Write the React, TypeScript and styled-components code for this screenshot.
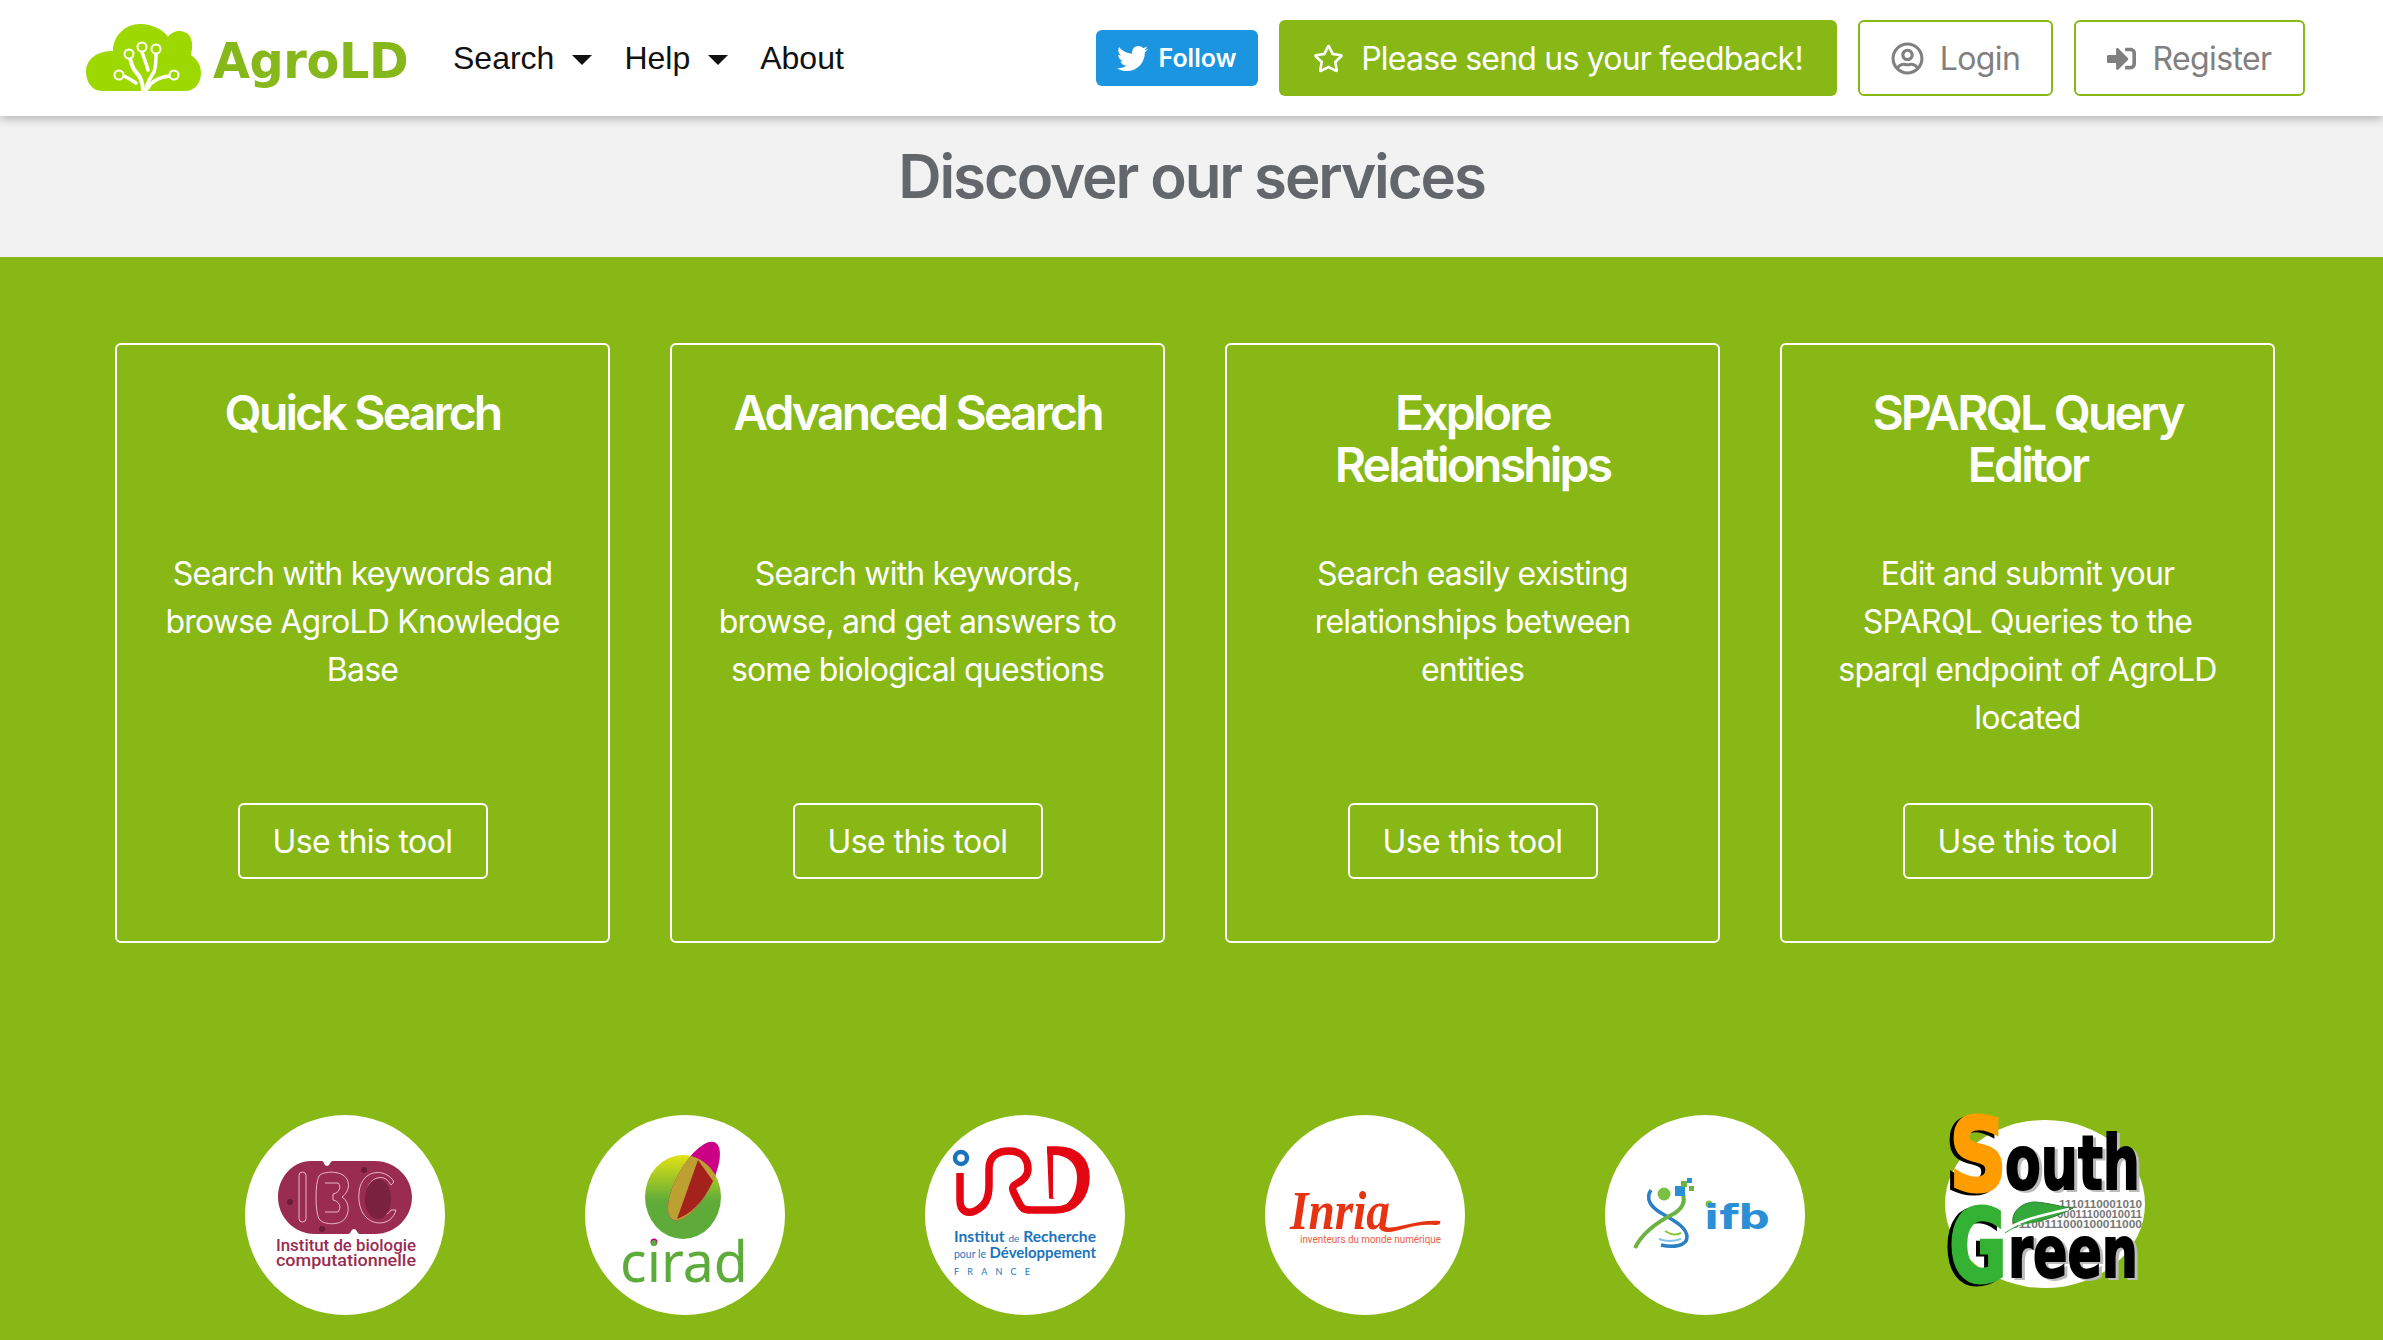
import React from 'react';
import styled, { createGlobalStyle } from 'styled-components';
import { FaRegStar, FaRegUserCircle, FaSignInAlt, FaTwitter } from 'react-icons/fa';

const GREEN = '#87b816';

const services = [
  {
    title: 'Quick Search',
    text: 'Search with keywords and browse AgroLD Knowledge Base'
  },
  {
    title: 'Advanced Search',
    text: 'Search with keywords, browse, and get answers to some biological questions'
  },
  {
    title: 'Explore Relationships',
    text: 'Search easily existing relationships between entities'
  },
  {
    title: 'SPARQL Query Editor',
    text: 'Edit and submit your SPARQL Queries to the sparql endpoint of AgroLD located'
  }
];

const CloudLogo = () => (
  <svg width="130" height="85" viewBox="0 0 130 85" style={{ margin: '0 -4px 0 -6px' }}>
    <path
      d="M22 77C11 77 6 66 6 58 6 45 17 37 33 37 33 22 45 10 60 10 72 10 84 16 88 23 92 17 100 16 104 18 111 20 114 28 111 41 118 46 121 52 121 59 121 69 115 77 105 77Z"
      fill="#9dd900"
    />
    <g fill="none" stroke="#fff" strokeLinecap="round">
      <path d="M63 77C63 68 60 62 56 58 52 54 51 48 50 44" strokeWidth="4" />
      <path d="M66 77C66 69 71 63 74 58 76 52 76 46 76 40" strokeWidth="3.5" />
      <path d="M68 56C66 48 63 42 62 38" strokeWidth="3.5" />
      <path d="M56 69C50 65 46 63 44 62" strokeWidth="3.5" />
      <path d="M68 74C72 66 80 63 90 62" strokeWidth="3.5" />
    </g>
    <g fill="#9dd900" stroke="#fff" strokeWidth="2">
      <circle cx="49" cy="40" r="4.5" />
      <circle cx="62" cy="33" r="4.5" />
      <circle cx="76" cy="35" r="4.5" />
      <circle cx="39" cy="61" r="4.5" />
      <circle cx="94" cy="61" r="4.5" />
    </g>
  </svg>
);

const IbcLogo = () => (
  <svg width="200" height="200" viewBox="0 0 200 200">
    <path
      d="M66 46H77C79 46 79 51 82 51 85 51 85 46 88 46H130C151 46 167 63 167 82 167 102 151 119 130 119H115C112 119 112 114 109 114 106 114 106 119 103 119H70C49 119 33 102 33 82 33 63 47 46 66 46Z"
      fill="#992c50"
    />
    <g fill="none" stroke="#f0c6d2" strokeWidth="0.9">
      <rect x="54" y="57" width="7" height="50" rx="3.5" />
      <path d="M74 61C77 56 100 54 103 67 105 74 100 80 97 82 102 85 105 92 102 100 98 112 78 110 74 104 70 96 70 68 74 61Z" />
      <path d="M80 68H93C97 72 94 78 88 79V85C94 86 97 92 93 97H80" />
      <path d="M149 67C143 55 121 52 115 72 111 88 117 107 134 108 143 108 149 103 151 95 H146 C143 101 130 104 124 90 120 78 122 66 132 63 139 61 143 65 146 70Z" />
    </g>
    <ellipse cx="133" cy="84" rx="13" ry="20" fill="#7a2140" />
    <g fill="#6a1c38">
      <circle cx="45" cy="87" r="3" />
      <circle cx="119" cy="55" r="3" />
      <circle cx="77" cy="114" r="3" />
    </g>
    <g fill="#992c50" fontFamily="Roboto, sans-serif" fontWeight="500" fontSize="16">
      <text x="31" y="136" textLength="140" lengthAdjust="spacingAndGlyphs">Institut de biologie</text>
      <text x="31" y="151" textLength="140" lengthAdjust="spacingAndGlyphs">computationnelle</text>
    </g>
  </svg>
);

const CiradLogo = () => (
  <svg width="200" height="200" viewBox="0 0 200 200">
    <defs>
      <linearGradient id="ciradGreen" x1="0" y1="0" x2="0" y2="1">
        <stop offset="0" stopColor="#e3e214" />
        <stop offset="0.55" stopColor="#60ab39" />
        <stop offset="1" stopColor="#5dab3a" />
      </linearGradient>
      <clipPath id="ciradClip">
        <ellipse cx="98" cy="82" rx="38" ry="42" />
      </clipPath>
    </defs>
    <ellipse cx="98" cy="82" rx="38" ry="42" fill="url(#ciradGreen)" />
    <ellipse cx="109" cy="66" rx="17" ry="44" transform="rotate(29 109 66)" fill="#cc0085" />
    <g clipPath="url(#ciradClip)">
      <ellipse cx="109" cy="66" rx="17" ry="44" transform="rotate(29 109 66)" fill="#bda032" />
      <path d="M113 45L92 104C104 100 118 88 128 66Z" fill="#a4211c" />
    </g>
    <circle cx="69" cy="127" r="3.5" fill="#cc0085" />
    <text x="35" y="167" textLength="128" lengthAdjust="spacingAndGlyphs" fontFamily="Noto Sans, sans-serif" fontSize="56" fill="#5dab3a">cirad</text>
  </svg>
);

const IrdLogo = () => (
  <svg width="200" height="200" viewBox="0 0 200 200">
    <circle cx="36" cy="43" r="6" fill="none" stroke="#1b75bc" strokeWidth="4.5" />
    <path
      d="M35 58V85C35 97 43 99 50 96 60 91 64 84 64 70V54C64 40 74 36 84 36 97 36 103 44 103 54 103 62 97 66 91 69 87 71 87 74 89 78L94 88C97 94 99 95 106 95H130C150 95 161 80 161 62 161 43 148 35 132 35H122"
      fill="none"
      stroke="#e30613"
      strokeWidth="7.5"
    />
    <path d="M122 33C146 33 163 42 163 62 163 84 148 97 130 95 147 90 152 76 152 62 152 48 142 40 128 40V83C134 83 124 85 124 83Z" fill="#e30613" />
    <g fill="#1b75bc" fontFamily="Lato, sans-serif" fontWeight="700">
      <text x="29" y="127" fontSize="15.5" textLength="142" lengthAdjust="spacingAndGlyphs">Institut <tspan fontSize="10" fontWeight="400">de</tspan> Recherche</text>
      <text x="29" y="143" fontSize="15" textLength="142" lengthAdjust="spacingAndGlyphs"><tspan fontSize="10.5" fontWeight="400">pour le</tspan> Développement</text>
      <text x="29" y="160" fontSize="9" fontWeight="400" textLength="76">FRANCE</text>
    </g>
  </svg>
);

const InriaLogo = () => (
  <svg width="200" height="200" viewBox="0 0 200 200">
    <text x="25" y="114" fontFamily="Liberation Serif, serif" fontStyle="italic" fontWeight="700" fontSize="54" fill="#e63312" textLength="100" lengthAdjust="spacingAndGlyphs">Inria</text>
    <path d="M114 112C130 116 150 104 175 106 176 109 174 110 170 110 150 108 136 116 124 117 118 117 115 115 114 112Z" fill="#e63312" />
    <text x="35" y="128" fontFamily="Roboto, sans-serif" fontSize="11" fill="#e9604a" textLength="141" lengthAdjust="spacingAndGlyphs">inventeurs du monde numérique</text>
  </svg>
);

const IfbLogo = () => (
  <svg width="200" height="200" viewBox="0 0 200 200">
    <path d="M46 75C40 84 46 92 56 98 68 105 82 112 82 122 82 131 68 133 56 130" fill="none" stroke="#2b7fc4" strokeWidth="3.5" />
    <path d="M30 133C38 116 58 104 70 98 79 92 81 84 76 75" fill="none" stroke="#6cb33f" strokeWidth="4" />
    <path d="M60 116C66 120 72 120 76 118" fill="none" stroke="#8cc63f" strokeWidth="2" />
    <path d="M54 124C62 127 70 126 76 124" fill="none" stroke="#7fc4ea" strokeWidth="2" />
    <circle cx="59" cy="79" r="6.5" fill="#7ac143" />
    <rect x="70" y="71" width="10" height="10" fill="#2b8fd6" />
    <rect x="76" y="66" width="6" height="6" fill="#6cb33f" />
    <rect x="82" y="63" width="5" height="5" fill="#2b8fd6" />
    <rect x="84" y="71" width="5" height="5" fill="#6cb33f" />
    <circle cx="104" cy="89" r="3.5" fill="#7ac143" />
    <text x="99" y="114" textLength="66" lengthAdjust="spacingAndGlyphs" fontFamily="DejaVu Sans, sans-serif" fontWeight="700" fontSize="34" fill="#2b8fd6">ifb</text>
  </svg>
);

const SouthGreenLogo = () => (
  <svg width="220" height="200" viewBox="-10 -10 220 200">
    <ellipse cx="100" cy="89" rx="100" ry="84" fill="#fff" />
    <g fontFamily="DejaVu Sans, sans-serif" fontWeight="700">
      <BigLetter x="4" y="76" fontSize="102" fill="#ff9c00" stroke="#ff9c00" textLength="58" lengthAdjust="spacingAndGlyphs">S</BigLetter>
      <SmallWord x="60" y="74" fontSize="75" fill="#000" stroke="#000" textLength="135" lengthAdjust="spacingAndGlyphs">outh</SmallWord>
      <BigLetter x="4" y="167" fontSize="102" fill="#34b233" stroke="#34b233" textLength="58" lengthAdjust="spacingAndGlyphs">G</BigLetter>
      <SmallWord x="63" y="162" fontSize="72" fill="#000" stroke="#000" textLength="130" lengthAdjust="spacingAndGlyphs">reen</SmallWord>
    </g>
    <g fontFamily="Liberation Sans, sans-serif" fontWeight="700" fontSize="11.5" fill="#777">
      <text x="114" y="93" textLength="83" lengthAdjust="spacingAndGlyphs">1110110001010</text>
      <text x="112" y="103" textLength="85" lengthAdjust="spacingAndGlyphs">00011100010011</text>
      <text x="67" y="113" textLength="130" lengthAdjust="spacingAndGlyphs">01100111000100011000</text>
    </g>
    <path d="M68 108C66 96 78 87 90 87 105 88 116 92 128 93 112 102 88 110 68 108Z" fill="#34a83a" stroke="#2f7d32" strokeWidth="1" />
    <path d="M59 117C74 104 100 100 124 94" fill="none" stroke="#fff" strokeWidth="2.5" />
    <path d="M60 118C74 108 86 108 96 106" fill="none" stroke="#34a83a" strokeWidth="1" />
  </svg>
);

export default function App() {
  return (
    <Page>
      <GlobalStyle />
      <Navbar>
        <NavLeft>
          <Brand>
            <CloudLogo />
            <BrandName>AgroLD</BrandName>
          </Brand>
          <NavLinks>
            <NavLink>
              Search
              <Caret />
            </NavLink>
            <NavLink>
              Help
              <Caret />
            </NavLink>
            <NavLink>About</NavLink>
          </NavLinks>
        </NavLeft>
        <NavRight>
          <FollowButton>
            <FaTwitter size={31} />
            Follow
          </FollowButton>
          <FeedbackButton>
            <FaRegStar size={31} />
            Please send us your feedback!
          </FeedbackButton>
          <OutlineButton $width={195}>
            <FaRegUserCircle size={33} />
            Login
          </OutlineButton>
          <OutlineButton $width={231}>
            <FaSignInAlt size={29} />
            Register
          </OutlineButton>
        </NavRight>
      </Navbar>

      <Intro>
        <Heading>Discover our services</Heading>
      </Intro>

      <Services>
        <CardGrid>
          {services.map(service => (
            <Card key={service.title}>
              <CardTitle>{service.title}</CardTitle>
              <CardText>{service.text}</CardText>
              <ToolButton>Use this tool</ToolButton>
            </Card>
          ))}
        </CardGrid>
        <Partners>
          <Badge><IbcLogo /></Badge>
          <Badge><CiradLogo /></Badge>
          <Badge><IrdLogo /></Badge>
          <Badge><InriaLogo /></Badge>
          <Badge><IfbLogo /></Badge>
          <Badge $plain><SouthGreenLogo /></Badge>
        </Partners>
      </Services>
    </Page>
  );
}

const GlobalStyle = createGlobalStyle`
  html, body {
    margin: 0;
    height: 1340px;
    overflow: hidden;
    background: ${GREEN};
  }
  * {
    box-sizing: border-box;
  }
`;

const Page = styled.div`
  font-family: Inter, "Liberation Sans", sans-serif;
  height: 1340px;
  display: flex;
  flex-direction: column;
`;

const Navbar = styled.nav`
  height: 116px;
  flex: none;
  background: #fff;
  padding: 0 78px 0 86px;
  display: flex;
  align-items: center;
  justify-content: space-between;
  box-shadow: 0 2px 10px rgba(0, 0, 0, 0.3);
  position: relative;
  z-index: 1;
`;

const NavLeft = styled.div`
  display: flex;
  align-items: center;
  gap: 46px;
`;

const Brand = styled.div`
  display: flex;
  align-items: center;
  gap: 7px;
  margin-top: -3px;
`;

const BrandName = styled.span`
  font-family: "DejaVu Sans", sans-serif;
  font-weight: 700;
  font-size: 50px;
  color: #86b81c;
  letter-spacing: -0.4px;
  margin-top: 9px;
  transform: scaleX(0.955);
  transform-origin: left center;
  width: 194px;
  white-space: nowrap;
`;

const NavLinks = styled.div`
  display: flex;
  align-items: center;
  gap: 32px;
`;

const NavLink = styled.span`
  font-family: "Liberation Sans", sans-serif;
  font-size: 32px;
  color: #111;
  display: flex;
  align-items: center;
  gap: 18px;
`;

const Caret = styled.i`
  width: 0;
  height: 0;
  margin-top: 4px;
  border-top: 10px solid #111;
  border-left: 10px solid transparent;
  border-right: 10px solid transparent;
`;

const NavRight = styled.div`
  display: flex;
  align-items: center;
  gap: 21px;
`;

const FollowButton = styled.button`
  width: 162px;
  height: 56px;
  border: 0;
  border-radius: 6px;
  background: #1b95e0;
  color: #fff;
  font: 600 25px Inter, sans-serif;
  display: flex;
  align-items: center;
  justify-content: center;
  gap: 10px;
`;

const FeedbackButton = styled.button`
  height: 76px;
  width: 558px;
  border: 0;
  border-radius: 6px;
  background: ${GREEN};
  color: #fff;
  font: 400 32px Inter, sans-serif;
  letter-spacing: -0.8px;
  display: flex;
  align-items: center;
  justify-content: center;
  gap: 17px;
`;

const OutlineButton = styled.button<{ $width: number }>`
  width: ${props => props.$width}px;
  height: 76px;
  padding: 0;
  border: 2px solid ${GREEN};
  border-radius: 6px;
  background: #fff;
  color: #808080;
  font: 400 32px Inter, sans-serif;
  letter-spacing: -0.6px;
  display: flex;
  align-items: center;
  justify-content: center;
  gap: 16px;
`;

const Intro = styled.section`
  height: 141px;
  flex: none;
  background: #f2f2f2;
  display: flex;
  justify-content: center;
  padding-top: 26px;
`;

const Heading = styled.h1`
  margin: 0;
  font-size: 60px;
  line-height: 68px;
  font-weight: 600;
  letter-spacing: -2.1px;
  color: #63666a;
`;

const Services = styled.section`
  flex: 1;
  background: ${GREEN};
  padding: 86px 0 0 115px;
  overflow: hidden;
`;

const CardGrid = styled.div`
  display: grid;
  grid-template-columns: repeat(4, 495px);
  column-gap: 60px;
`;

const Card = styled.article`
  height: 600px;
  border: 2px solid #fff;
  border-radius: 6px;
  padding: 42px 40px 62px;
  color: #fff;
  text-align: center;
  display: flex;
  flex-direction: column;
`;

const CardTitle = styled.h2`
  margin: 0 0 59px;
  min-height: 104px;
  font-size: 48px;
  line-height: 52px;
  font-weight: 600;
  letter-spacing: -2.8px;
`;

const CardText = styled.p`
  margin: 0;
  flex: 1;
  font-size: 32px;
  line-height: 48px;
  letter-spacing: -0.8px;
`;

const ToolButton = styled.button`
  align-self: center;
  width: 250px;
  height: 76px;
  border: 2px solid #fff;
  border-radius: 6px;
  background: transparent;
  color: #fff;
  font: 400 32px Inter, sans-serif;
  letter-spacing: -0.6px;
`;

const Partners = styled.div`
  margin-top: 172px;
  padding-left: 130px;
  display: grid;
  grid-template-columns: repeat(6, 200px);
  column-gap: 140px;
`;

const Badge = styled.div<{ $plain?: boolean }>`
  width: 200px;
  height: 200px;
  border-radius: 50%;
  background: ${props => (props.$plain ? 'transparent' : '#fff')};

  svg {
    display: block;
    overflow: visible;
    margin: ${props => (props.$plain ? '-10px 0 0 -10px' : '0')};
  }
`;

const BigLetter = styled.text`
  stroke-width: 3px;
  filter: drop-shadow(-4px 2px 0 #000);
`;

const SmallWord = styled.text`
  stroke-width: 2px;
  filter: drop-shadow(3px 2px 0 #bbb);
`;
